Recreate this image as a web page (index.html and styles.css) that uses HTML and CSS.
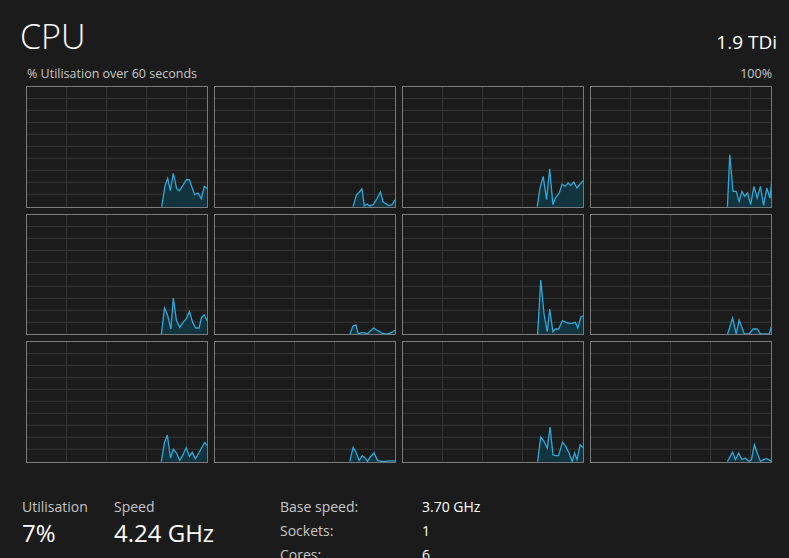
FILE: index.html
```html
<!DOCTYPE html>
<html lang="en">
<head>
<meta charset="utf-8">
<title>CPU</title>
<link rel="stylesheet" href="styles.css">
</head>
<body>
<svg class="defs" width="0" height="0" aria-hidden="true">
  <defs>
    <g id="grid">
      <path d="M40.5 0V122M80.5 0V122M120.5 0V122M160.5 0V122M0 12.5H182M0 24.5H182M0 36.5H182M0 48.5H182M0 60.5H182M0 72.5H182M0 84.5H182M0 96.5H182M0 108.5H182"/>
    </g>
  </defs>
</svg>
<main class="page">
  <header class="head">
    <h1 class="title">CPU</h1>
    <div class="model">1.9 TDi</div>
  </header>
  <div class="sub">
    <span>% Utilisation over 60 seconds</span>
    <span>100%</span>
  </div>

  <section class="graphs">
    <div class="cell"><svg viewBox="1 1 180 120" preserveAspectRatio="none"><use href="#grid" class="gridlines"/><polygon class="area" points="135.7,121 139,100 141.7,92.7 144.3,105 147.3,87.7 150.7,103 153.3,105 156.7,100 160.3,94 163.3,94 168.7,109 172,107.3 175.3,113 178.3,100.7 181,102.7 182,122"/><polyline class="line" points="135.7,121 139,100 141.7,92.7 144.3,105 147.3,87.7 150.7,103 153.3,105 156.7,100 160.3,94 163.3,94 168.7,109 172,107.3 175.3,113 178.3,100.7 181,102.7"/></svg></div>
    <div class="cell"><svg viewBox="1 1 180 120" preserveAspectRatio="none"><use href="#grid" class="gridlines"/><polygon class="area" points="139.1,121 142.3,109.7 147.9,103.3 150.3,120.3 153.1,118.3 155.5,120.3 159.2,119 162.4,114 166.4,106.3 169.2,116.3 172.4,118.3 174.8,120 178.1,119 181.3,114 182,122"/><polyline class="line" points="139.1,121 142.3,109.7 147.9,103.3 150.3,120.3 153.1,118.3 155.5,120.3 159.2,119 162.4,114 166.4,106.3 169.2,116.3 172.4,118.3 174.8,120 178.1,119 181.3,114"/></svg></div>
    <div class="cell"><svg viewBox="1 1 180 120" preserveAspectRatio="none"><use href="#grid" class="gridlines"/><polygon class="area" points="135.2,121 138,102.3 141.2,90.7 144.5,114 147.7,83 150.9,119 153.3,112.3 157.3,107.3 160.1,98.3 163,100.7 166.2,97.3 168.6,99.7 171.8,96.3 175,102.3 178.2,98.3 181.1,95 182,122"/><polyline class="line" points="135.2,121 138,102.3 141.2,90.7 144.5,114 147.7,83 150.9,119 153.3,112.3 157.3,107.3 160.1,98.3 163,100.7 166.2,97.3 168.6,99.7 171.8,96.3 175,102.3 178.2,98.3 181.1,95"/></svg></div>
    <div class="cell"><svg viewBox="1 1 180 120" preserveAspectRatio="none"><use href="#grid" class="gridlines"/><polygon class="area" points="137.4,121 139.8,69 143,105.7 146.2,105.7 149.1,115.7 151.9,105.7 154.7,110.7 157.5,107.3 160.7,119 163.9,100.7 167.2,112.3 170.4,100.7 173.6,119.7 176.8,102.3 180,112.3 181.5,97.3 182,122"/><polyline class="line" points="137.4,121 139.8,69 143,105.7 146.2,105.7 149.1,115.7 151.9,105.7 154.7,110.7 157.5,107.3 160.7,119 163.9,100.7 167.2,112.3 170.4,100.7 173.6,119.7 176.8,102.3 180,112.3 181.5,97.3"/></svg></div>

    <div class="cell"><svg viewBox="1 1 180 120" preserveAspectRatio="none"><use href="#grid" class="gridlines"/><polygon class="area" points="135.3,121 138.5,94.3 141.7,102 144.9,115.3 147.3,84.3 150.5,107 153.8,113.7 157,108.7 160.2,105.3 163.4,97.7 166.6,108.7 169.8,114.3 173.1,114.3 175.5,103.7 178.3,101 181.1,107 182,122"/><polyline class="line" points="135.3,121 138.5,94.3 141.7,102 144.9,115.3 147.3,84.3 150.5,107 153.8,113.7 157,108.7 160.2,105.3 163.4,97.7 166.6,108.7 169.8,114.3 173.1,114.3 175.5,103.7 178.3,101 181.1,107"/></svg></div>
    <div class="cell"><svg viewBox="1 1 180 120" preserveAspectRatio="none"><use href="#grid" class="gridlines"/><polygon class="area" points="135.8,121 139.1,112 141.9,111.3 144.3,120.3 147.5,119 150.7,119 153.1,120.3 159.6,114.3 163.6,117 167.2,119 170.4,120.3 174,120.3 177.3,119 181.3,116.3 182,122"/><polyline class="line" points="135.8,121 139.1,112 141.9,111.3 144.3,120.3 147.5,119 150.7,119 153.1,120.3 159.6,114.3 163.6,117 167.2,119 170.4,120.3 174,120.3 177.3,119 181.3,116.3"/></svg></div>
    <div class="cell"><svg viewBox="1 1 180 120" preserveAspectRatio="none"><use href="#grid" class="gridlines"/><polygon class="area" points="135.6,121 138.8,66.3 142,100.3 145.3,118 147.7,95.3 150.9,118 153.3,115.3 156.5,115.3 160.5,107 163.8,108.7 167,109.7 170.2,109.7 173.4,108.7 175.8,114.3 179,103 181.5,102 182,122"/><polyline class="line" points="135.6,121 138.8,66.3 142,100.3 145.3,118 147.7,95.3 150.9,118 153.3,115.3 156.5,115.3 160.5,107 163.8,108.7 167,109.7 170.2,109.7 173.4,108.7 175.8,114.3 179,103 181.5,102"/></svg></div>
    <div class="cell"><svg viewBox="1 1 180 120" preserveAspectRatio="none"><use href="#grid" class="gridlines"/><polygon class="area" points="137.4,121 142.6,104.3 146.2,120.3 149.1,106.3 154.3,120.3 159.1,120.3 163.1,115.3 167.2,115.3 170.4,120.3 175.2,120.3 179.2,120.3 181.3,113 182,122"/><polyline class="line" points="137.4,121 142.6,104.3 146.2,120.3 149.1,106.3 154.3,120.3 159.1,120.3 163.1,115.3 167.2,115.3 170.4,120.3 175.2,120.3 179.2,120.3 181.3,113"/></svg></div>

    <div class="cell"><svg viewBox="1 1 180 120" preserveAspectRatio="none"><use href="#grid" class="gridlines"/><polygon class="area" points="135.3,121 138.5,101.7 141.3,94.3 144.5,117.3 147.3,108.3 150.5,112.3 153.8,119.7 157,114 160.2,107 163.4,115.7 166.2,111.7 169.4,118.3 172.7,112.3 175.5,107.3 178.7,101.7 181.1,105 182,122"/><polyline class="line" points="135.3,121 138.5,101.7 141.3,94.3 144.5,117.3 147.3,108.3 150.5,112.3 153.8,119.7 157,114 160.2,107 163.4,115.7 166.2,111.7 169.4,118.3 172.7,112.3 175.5,107.3 178.7,101.7 181.1,105"/></svg></div>
    <div class="cell"><svg viewBox="1 1 180 120" preserveAspectRatio="none"><use href="#grid" class="gridlines"/><polygon class="area" points="135.8,121 139.1,106.7 141.9,111.3 145.1,119.7 148.3,115 151.1,117.3 153.5,120.7 156.3,116.3 160,112.3 163.6,119.7 167.2,120.7 171.2,120.7 175.2,120.3 181.3,120.3 182,122"/><polyline class="line" points="135.8,121 139.1,106.7 141.9,111.3 145.1,119.7 148.3,115 151.1,117.3 153.5,120.7 156.3,116.3 160,112.3 163.6,119.7 167.2,120.7 171.2,120.7 175.2,120.3 181.3,120.3"/></svg></div>
    <div class="cell"><svg viewBox="1 1 180 120" preserveAspectRatio="none"><use href="#grid" class="gridlines"/><polygon class="area" points="135.6,121 138.8,96.3 142,100.7 145.3,107.3 148.1,86.3 150.9,114 153.3,115 156.5,115 160.5,101.7 163.8,105.7 167,112.3 170.2,120.7 172.6,112.3 175,119 178.2,104 181.5,107.3 182,122"/><polyline class="line" points="135.6,121 138.8,96.3 142,100.7 145.3,107.3 148.1,86.3 150.9,114 153.3,115 156.5,115 160.5,101.7 163.8,105.7 167,112.3 170.2,120.7 172.6,112.3 175,119 178.2,104 181.5,107.3"/></svg></div>
    <div class="cell"><svg viewBox="1 1 180 120" preserveAspectRatio="none"><use href="#grid" class="gridlines"/><polygon class="area" points="137.4,121 142.6,111.3 145.4,119 148.7,112.3 151.9,119 155.1,117.3 159.1,120.7 161.5,119 164.4,104 167.2,112.3 170.4,120.7 173.6,119 176.8,118 180,119.7 181.3,120.7 182,122"/><polyline class="line" points="137.4,121 142.6,111.3 145.4,119 148.7,112.3 151.9,119 155.1,117.3 159.1,120.7 161.5,119 164.4,104 167.2,112.3 170.4,120.7 173.6,119 176.8,118 180,119.7 181.3,120.7"/></svg></div>
  </section>

  <section class="stats">
    <div class="stat">
      <div class="label">Utilisation</div>
      <div class="value">7%</div>
    </div>
    <div class="stat">
      <div class="label">Speed</div>
      <div class="value">4.24 GHz</div>
    </div>
    <dl class="specs">
      <dt>Base speed:</dt><dd>3.70 GHz</dd>
      <dt>Sockets:</dt><dd>1</dd>
      <dt>Cores:</dt><dd>6</dd>
    </dl>
  </section>
</main>
</body>
</html>
```

FILE: styles.css
```css
html, body {
  margin: 0;
  padding: 0;
  background: #1b1b1b;
  height: 100%;
  overflow: hidden;
}

body {
  font-family: "Open Sans", "Noto Sans", sans-serif;
  color: #ffffff;
}

.defs {
  position: absolute;
  width: 0;
  height: 0;
}

.page {
  padding: 16px 17px 0 26px;
}

.head {
  display: flex;
  justify-content: space-between;
  align-items: baseline;
  margin: 0 -5px 0 -6px;
  height: 40px;
}

.title {
  margin: 0;
  font-size: 34px;
  font-weight: 300;
  line-height: 40px;
  color: #ffffff;
}

.model {
  font-size: 19px;
  line-height: 24px;
  color: #ffffff;
}

.sub {
  display: flex;
  justify-content: space-between;
  margin: 10px 0 4px 1px;
  font-size: 12.5px;
  line-height: 16px;
  color: #c8c8c8;
}

.graphs {
  display: grid;
  grid-template-columns: repeat(4, 1fr);
  grid-template-rows: repeat(3, 1fr);
  gap: 6px;
  height: 377px;
}

.cell {
  border: 1px solid #7a7a7a;
  background: #1b1b1b;
  overflow: hidden;
}

.cell svg {
  display: block;
  width: 100%;
  height: 100%;
}

.gridlines {
  stroke: #363636;
  stroke-width: 1;
  fill: none;
  shape-rendering: crispEdges;
}

.area {
  fill: #12343f;
  stroke: none;
}

.line {
  fill: none;
  stroke: #2fa7d8;
  stroke-width: 1.3;
  stroke-linejoin: miter;
}

.stats {
  display: flex;
  margin: 34px 0 0 -4px;
}

.stat {
  display: flex;
  flex-direction: column;
}

.stat:first-child {
  width: 92px;
}

.stat:nth-child(2) {
  width: 166px;
}

.label {
  font-size: 14px;
  line-height: 20px;
  color: #c4c4c4;
}

.value {
  font-size: 24px;
  line-height: 32px;
  color: #ffffff;
}

.specs {
  display: grid;
  grid-template-columns: 142px auto;
  grid-auto-rows: 24px;
  margin: -2px 0 0 0;
  font-size: 14px;
  line-height: 24px;
}

.specs dt {
  color: #c8c8c8;
}

.specs dd {
  margin: 0;
  color: #ffffff;
}
```
